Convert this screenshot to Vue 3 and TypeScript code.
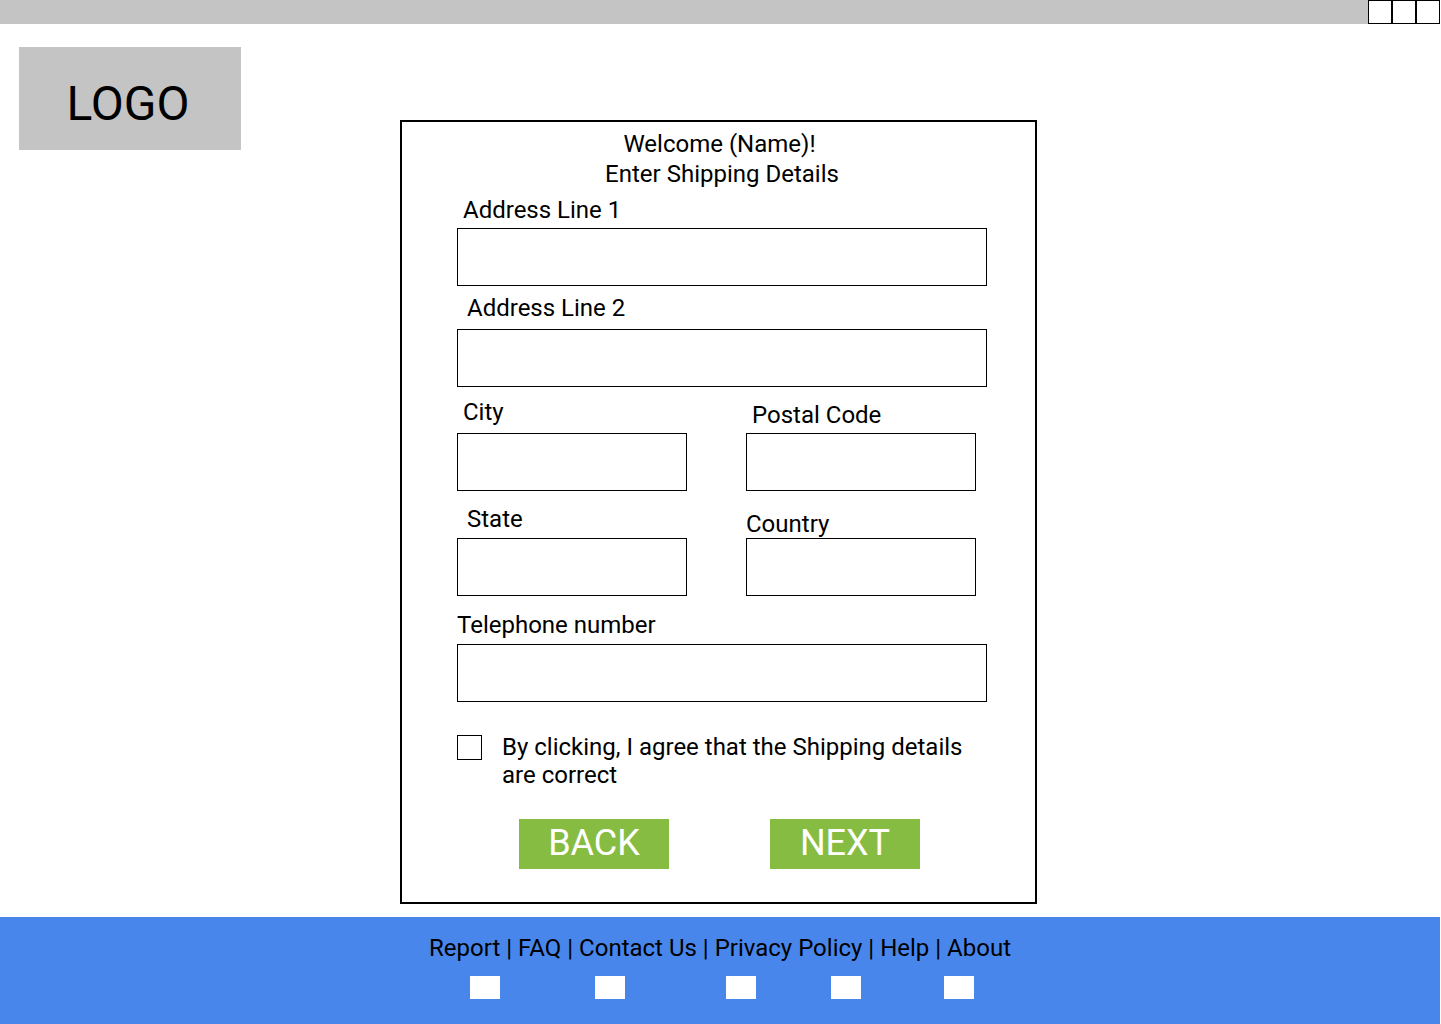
<script setup lang="ts">
import { reactive } from 'vue'

interface ShippingDetails {
  address1: string
  address2: string
  city: string
  postalCode: string
  state: string
  country: string
  telephone: string
  confirmed: boolean
}

const details = reactive<ShippingDetails>({
  address1: '',
  address2: '',
  city: '',
  postalCode: '',
  state: '',
  country: '',
  telephone: '',
  confirmed: false,
})

const footerLinks: string[] = ['Report', 'FAQ', 'Contact Us', 'Privacy Policy', 'Help', 'About']
</script>

<template>
  <div class="page">
    <header class="titlebar">
      <span v-for="n in 3" :key="n" class="window-box"></span>
    </header>

    <main class="main">
      <div class="logo">LOGO</div>

      <form class="card" @submit.prevent>
        <div class="heading">
          <p>Welcome (Name)!</p>
          <h1>Enter Shipping Details</h1>
        </div>

        <div class="field">
          <label class="gap-s indent-s" for="address1">Address Line 1</label>
          <input id="address1" v-model="details.address1" type="text" />
        </div>

        <div class="field address2">
          <label class="gap-l indent-m" for="address2">Address Line 2</label>
          <input id="address2" v-model="details.address2" type="text" />
        </div>

        <div class="pair city-row">
          <div class="field">
            <label class="gap-l indent-s" for="city">City</label>
            <input id="city" v-model="details.city" type="text" />
          </div>
          <div class="field">
            <label class="gap-s indent-s" for="postal">Postal Code</label>
            <input id="postal" v-model="details.postalCode" type="text" />
          </div>
        </div>

        <div class="pair state-row">
          <div class="field">
            <label class="gap-m indent-m" for="state">State</label>
            <input id="state" v-model="details.state" type="text" />
          </div>
          <div class="field">
            <label for="country">Country</label>
            <input id="country" v-model="details.country" type="text" />
          </div>
        </div>

        <div class="field telephone">
          <label class="gap-m" for="telephone">Telephone number</label>
          <input id="telephone" v-model="details.telephone" type="tel" />
        </div>

        <div class="agree">
          <input id="confirmed" v-model="details.confirmed" type="checkbox" />
          <label for="confirmed">By clicking, I agree that the Shipping details are correct</label>
        </div>

        <div class="actions">
          <button type="button">BACK</button>
          <button type="submit">NEXT</button>
        </div>
      </form>
    </main>

    <footer class="footer">
      <nav>
        <template v-for="(link, i) in footerLinks" :key="link">{{ i > 0 ? ' | ' : '' }}<a href="#">{{ link }}</a></template>
      </nav>
      <div class="social">
        <span v-for="n in 5" :key="n" class="social-box"></span>
      </div>
    </footer>
  </div>
</template>

<style>
body {
  margin: 0;
  background: #fff;
}
</style>

<style scoped>
.page {
  display: flex;
  flex-direction: column;
  min-height: 100vh;
  box-sizing: border-box;
  padding-right: 1px;
  font-family: Roboto, sans-serif;
  font-size: 24px;
  line-height: 28px;
  color: #000;
}

.titlebar {
  display: flex;
  justify-content: flex-end;
  height: 24px;
  background: #c4c4c4;
}

.window-box {
  box-sizing: border-box;
  width: 24px;
  height: 24px;
  border: 1px solid #000;
  background: #fff;
}

.main {
  flex: 1;
  display: grid;
  grid-template-columns: 1fr minmax(0, 637px) 1fr;
  align-items: start;
  padding-right: 3px;
}

.logo {
  box-sizing: border-box;
  width: 222px;
  height: 103px;
  margin: 23px 0 0 19px;
  padding: 10px 4px 0 0;
  display: flex;
  align-items: center;
  justify-content: center;
  background: #c4c4c4;
  font-size: 48px;
  line-height: 56px;
}

.card {
  box-sizing: border-box;
  margin: 96px 0 13px;
  padding: 8px 48px 33px 55px;
  border: 2px solid #000;
}

.heading {
  display: flex;
  flex-direction: column;
  gap: 2px;
  margin-bottom: 8px;
  text-align: center;
}

.heading p,
.heading h1 {
  margin: 0;
  font-size: inherit;
  font-weight: 400;
}

.heading p {
  padding-right: 5px;
}

.field {
  display: flex;
  flex-direction: column;
  justify-content: flex-end;
}

.field input {
  box-sizing: border-box;
  width: 100%;
  height: 58px;
  padding: 0 12px;
  border: 1px solid #000;
  border-radius: 0;
  background: #fff;
  font: inherit;
}

.gap-s {
  margin-bottom: 4px;
}

.gap-m {
  margin-bottom: 5px;
}

.gap-l {
  margin-bottom: 7px;
}

.indent-s {
  padding-left: 6px;
}

.indent-m {
  padding-left: 10px;
}

.address2 {
  margin-top: 8px;
}

.pair {
  display: grid;
  grid-template-columns: repeat(2, minmax(0, 230px));
  column-gap: 59px;
}

.city-row {
  margin-top: 11px;
}

.state-row {
  margin-top: 14px;
}

.telephone {
  margin-top: 15px;
}

.agree {
  display: flex;
  align-items: flex-start;
  gap: 20px;
  margin-top: 31px;
}

.agree input {
  appearance: none;
  flex: none;
  box-sizing: border-box;
  width: 25px;
  height: 25px;
  margin: 2px 0 0;
  border: 1px solid #000;
  background: #fff;
}

.agree input:checked {
  background: #000;
  box-shadow: inset 0 0 0 4px #fff;
}

.actions {
  display: flex;
  justify-content: center;
  gap: 101px;
  margin-top: 30px;
  padding-right: 5px;
}

.actions button {
  width: 150px;
  height: 50px;
  padding: 0 0 2px;
  border: 0;
  background: #86bc42;
  color: #fff;
  font: inherit;
  font-size: 36px;
  line-height: 42px;
}

.footer {
  display: flex;
  flex-direction: column;
  align-items: center;
  gap: 14px;
  padding: 17px 0 25px;
  background: #4886ec;
}

.footer a {
  color: inherit;
  text-decoration: none;
}

.social {
  display: grid;
  grid-template-columns: 125px 131px 105px 113px 30px;
  padding-left: 4px;
}

.social-box {
  width: 30px;
  height: 23px;
  background: #fff;
}
</style>
